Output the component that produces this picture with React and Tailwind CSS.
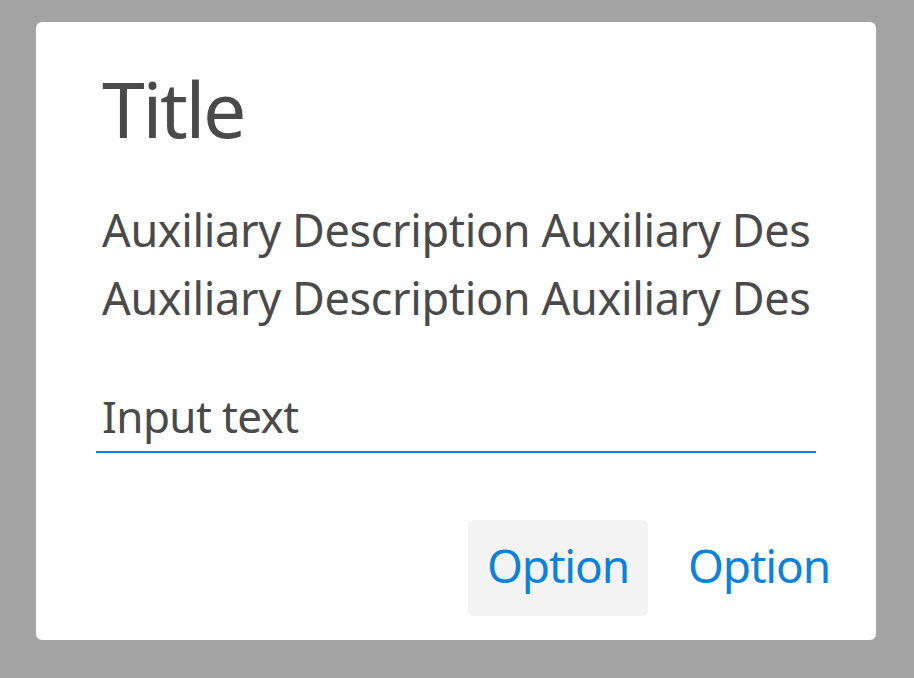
export default function App() {
  return (
    <div className="w-[914px] h-[678px] bg-[#a3a3a3] pt-[22px] pl-[36px] font-['Noto_Sans',sans-serif]">
      <div className="w-[840px] h-[618px] bg-white rounded-[6px] pt-[48px] px-[60px] flex flex-col">
        <h1 className="pl-[6px] text-[77px] leading-[77px] tracking-[-0.03em] text-[#4a4a4a] font-normal">Title</h1>

        <div className="mt-[49px] pl-[6px] w-[720px] text-[45px] leading-[68px] tracking-[-0.008em] text-[#4a4a4a]">
          <p className="whitespace-nowrap">Auxiliary Description Auxiliary Des</p>
          <p className="whitespace-nowrap">Auxiliary Description Auxiliary Des</p>
        </div>

        <input
          readOnly
          defaultValue="Input text"
          className="mt-[58px] w-[720px] h-[63px] pl-[6px] pb-[9px] text-[44px] leading-[52px] tracking-[-0.014em] text-[#4a4a4a] border-b-2 border-[#1080d8] outline-none bg-transparent"
        />

        <div className="mt-[67px] flex justify-end gap-[21px] -mr-[33px]">
          <button className="w-[180px] h-[96px] rounded-[6px] bg-[#f4f4f4] text-[46px] leading-none tracking-[-0.026em] pb-[6px] text-[#0c82d8]">Option</button>
          <button className="w-[180px] h-[96px] rounded-[6px] text-[46px] leading-none tracking-[-0.026em] pb-[6px] text-[#0c82d8]">Option</button>
        </div>
      </div>
    </div>
  )
}
